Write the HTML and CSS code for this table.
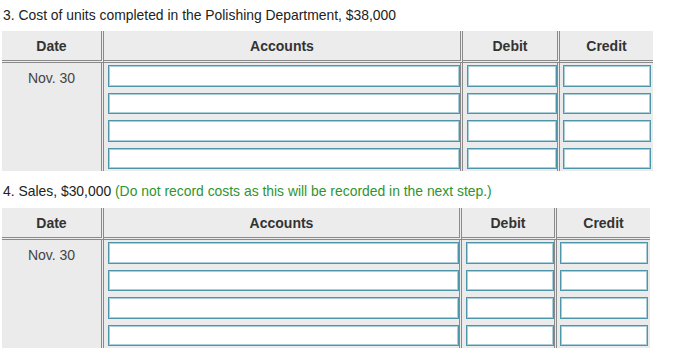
FILE: index.html
```html
<!DOCTYPE html>
<html>
<head>
<meta charset="utf-8">
<link rel="stylesheet" href="styles.css">
</head>
<body>
<div class="page">
  <p class="q q1">3. Cost of units completed in the Polishing Department, $38,000</p>
  <div class="jt jt1">
    <div class="th c-date">Date</div>
    <div class="th c-acc">Accounts</div>
    <div class="th c-deb">Debit</div>
    <div class="th c-cre">Credit</div>
    <div class="td c-date"><span class="date">Nov. 30</span></div>
    <div class="td c-acc"><input class="in"><input class="in"><input class="in"><input class="in"></div>
    <div class="td c-deb"><input class="in"><input class="in"><input class="in"><input class="in"></div>
    <div class="td c-cre"><input class="in"><input class="in"><input class="in"><input class="in"></div>
  </div>
  <p class="q q2">4. Sales, $30,000 <span class="note">(Do not record costs as this will be recorded in the next step.)</span></p>
  <div class="jt jt2">
    <div class="th c-date">Date</div>
    <div class="th c-acc">Accounts</div>
    <div class="th c-deb">Debit</div>
    <div class="th c-cre">Credit</div>
    <div class="td c-date"><span class="date">Nov. 30</span></div>
    <div class="td c-acc"><input class="in"><input class="in"><input class="in"><input class="in"></div>
    <div class="td c-deb"><input class="in"><input class="in"><input class="in"><input class="in"></div>
    <div class="td c-cre"><input class="in"><input class="in"><input class="in"><input class="in"></div>
  </div>
</div>
</body>
</html>
```
FILE: styles.css
```css
html, body {
  margin: 0;
  padding: 0;
  background: #fff;
}
.page {
  padding-left: 2px;
  font-family: "Liberation Sans", Arial, sans-serif;
  font-size: 14px;
  color: #222;
}
.q {
  margin: 0;
  padding-left: 1px;
  line-height: 18px;
  height: 18px;
  font-size: 13.9px;
}
.q1 {
  padding-top: 6px;
  margin-bottom: 7px;
}
.q2 {
  margin-top: 11px;
  margin-bottom: 8px;
}
.note {
  color: #2f9430;
}
.jt {
  display: grid;
  grid-template-rows: 32px 108px;
}
.jt1 {
  grid-template-columns: 102px 359px 97px 93px;
  width: 651px;
}
.jt2 {
  grid-template-columns: 102px 358px 95px 93px;
  width: 648px;
}
.th {
  background: #ececec;
  border-bottom: 3px double #8a8a8a;
  font-weight: bold;
  color: #333;
  text-align: center;
  line-height: 27px;
  padding-top: 2px;
  box-sizing: border-box;
}
.td {
  background: #ebebeb;
  box-sizing: border-box;
  display: flex;
  flex-direction: column;
}
.c-date, .c-acc, .c-deb {
  border-right: 3px double #8a8a8a;
}
.td.c-date {
  align-items: center;
  padding-top: 6px;
}
.date {
  color: #444;
  line-height: 18px;
}
.td.c-acc, .td.c-deb {
  padding-left: 4px;
  padding-right: 0;
}
.td.c-cre {
  padding-left: 3px;
  padding-right: 2px;
}
.in {
  display: block;
  box-sizing: border-box;
  height: 23px;
  width: 100%;
  margin: 2px 0 2px 0;
  padding: 0;
  border: 1px solid #4f95aa;
  box-shadow: inset 0 0 0 1px #a8cfdb;
  background: #fff;
  outline: none;
}
.td .in + .in {
  margin-top: 4px;
}
```
